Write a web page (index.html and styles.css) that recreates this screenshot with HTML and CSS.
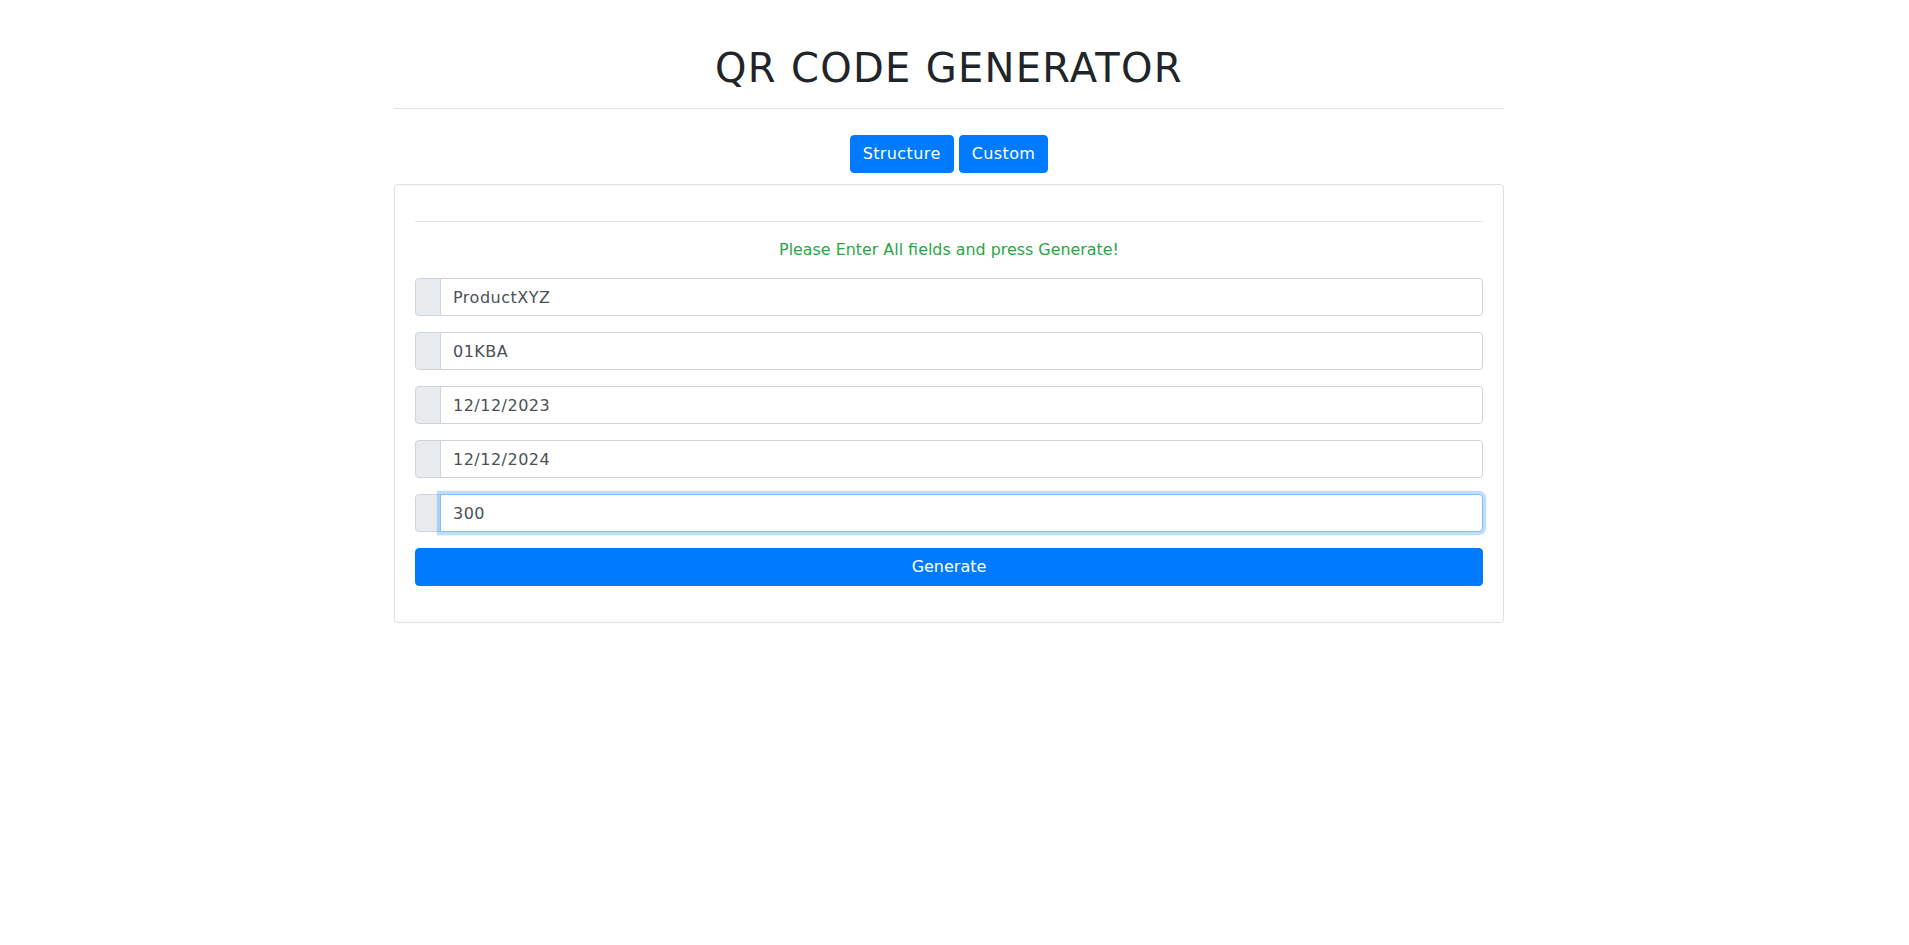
FILE: index.html
```html
<!DOCTYPE html>
<html lang="en">
<head>
<meta charset="utf-8">
<title>QR Code Generator</title>
<link rel="stylesheet" href="styles.css">
</head>
<body>
<div class="page">
  <div class="container">
    <h1 class="title">QR CODE GENERATOR</h1>
    <hr class="rule">
    <div class="tabs">
      <button class="btn btn-tab">Structure</button>
      <button class="btn btn-tab">Custom</button>
    </div>
    <div class="card">
      <div class="card-body">
        <hr class="card-rule">
        <p class="msg">Please Enter All fields and press Generate!</p>
        <div class="field"><span class="addon"></span><input class="input" type="text" value="ProductXYZ"></div>
        <div class="field"><span class="addon"></span><input class="input" type="text" value="01KBA"></div>
        <div class="field"><span class="addon"></span><input class="input" type="text" value="12/12/2023"></div>
        <div class="field"><span class="addon"></span><input class="input" type="text" value="12/12/2024"></div>
        <div class="field"><span class="addon"></span><input class="input is-focused" type="text" value="300"></div>
        <button class="btn btn-block">Generate</button>
      </div>
    </div>
  </div>
</div>
</body>
</html>
```
FILE: styles.css
```css
* { box-sizing: border-box; }
html, body { margin: 0; padding: 0; background: #fff; }
body {
  font-family: "DejaVu Sans", "Noto Sans", sans-serif;
  font-size: 16px;
  line-height: 1.5;
  color: #212529;
}
.page { padding: 44px 11px 0 0; }
.container { width: 1110px; margin: 0 auto; }
.title {
  margin: 0;
  font-size: 40px;
  font-weight: 400;
  line-height: 48px;
  letter-spacing: 1.3px;
  text-align: center;
  color: #212529;
}
.rule {
  margin: 16px 0 26px;
  border: 0;
  border-top: 1px solid rgba(0,0,0,.1);
  height: 0;
}
.tabs {
  display: flex;
  justify-content: center;
  gap: 5px;
  margin-bottom: 11px;
}
.btn {
  font-family: inherit;
  font-size: 16px;
  line-height: 24px;
  height: 38px;
  padding: 6px 12px;
  color: #fff;
  background: #007bff;
  border: 1px solid #007bff;
  border-radius: 4px;
}
.btn-tab { letter-spacing: 0.4px; }
.btn-block { display: block; width: 100%; margin-bottom: 16px; }
.card {
  border: 1px solid rgba(0,0,0,.125);
  border-radius: 4px;
}
.card-body { padding: 20px; }
.card-rule {
  margin: 16px 0;
  border: 0;
  border-top: 1px solid rgba(0,0,0,.1);
  height: 0;
}
.msg {
  margin: 0 0 16px;
  text-align: center;
  color: #28a745;
  font-size: 15.9px;
  line-height: 24px;
}
.field {
  display: flex;
  margin-bottom: 16px;
  height: 38px;
}
.addon {
  width: 26px;
  flex: none;
  background: #e9ecef;
  border: 1px solid #ced4da;
  border-radius: 4px 0 0 4px;
}
.input {
  flex: 1;
  min-width: 0;
  margin-left: -1px;
  height: 38px;
  padding: 6px 12px;
  font-family: inherit;
  font-size: 16px;
  line-height: 24px;
  letter-spacing: 0.5px;
  color: #495057;
  background: #fff;
  border: 1px solid #ced4da;
  border-radius: 0 4px 4px 0;
  outline: none;
  position: relative;
}
.input.is-focused {
  border-color: #80bdff;
  box-shadow: 0 0 0 3.2px rgba(0,123,255,.25);
  z-index: 3;
}
```
